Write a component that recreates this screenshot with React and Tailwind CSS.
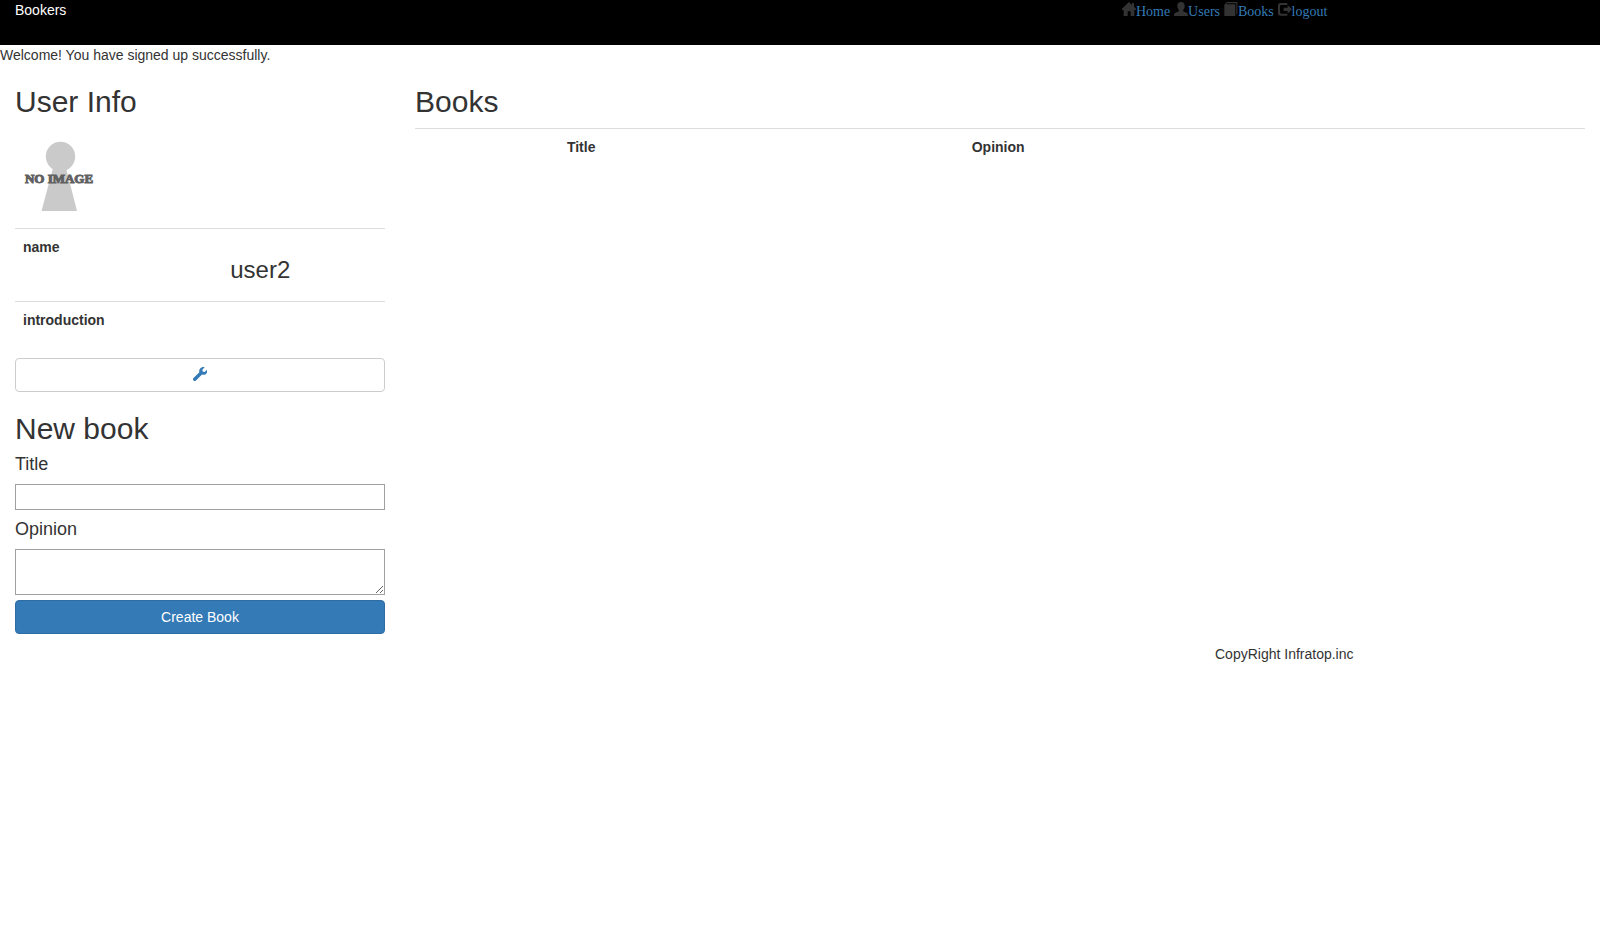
const HomeIcon = () => (
  <svg viewBox="0 0 42 42" className="inline-block size-3.5 fill-[#333] align-baseline" aria-hidden="true">
    <path d="M21 0 L30 9 V3 H36 V14 L42 20.500 V24 H37 V42 H26 V28 H17 V42 H5 V24 H0 V20.500 Z" />
  </svg>
);

const UserIcon = () => (
  <svg viewBox="0 0 42 42" className="inline-block size-3.5 fill-[#333] align-baseline" aria-hidden="true">
    <path d="M21 0 C28 0 32 4 32 11 C32 17 30 21 27.500 24 V28 C30 30 35 31 39 33 C41.500 35 42 38 42 42 H0 C0 38 0.500 35 3 33 C7 31 12 30 14.500 28 V24 C12 21 10 17 10 11 C10 4 14 0 21 0 Z" />
  </svg>
);

const BookIcon = () => (
  <svg viewBox="0 0 42 42" className="inline-block size-3.5 fill-[#333] align-baseline" aria-hidden="true">
    <path d="M9 0 H40 V36 L37 39 V4 H9 L6 7 H34 V42 H1 V8 Z" />
  </svg>
);

const LogoutIcon = () => (
  <svg viewBox="0 0 42 42" className="inline-block size-3.5 fill-[#333] align-baseline" aria-hidden="true">
    <path d="M8 3 H28 V9 H10 Q6 9 6 13 V31 Q6 35 10 35 H28 V41 H8 Q0 41 0 33 V11 Q0 3 8 3 Z" />
    <path d="M29 9 L42 22 L29 35 V27 H17 V17 H29 Z" />
  </svg>
);

const WrenchIcon = () => (
  <svg viewBox="0 0 42 42" className="size-3.5 fill-[#337ab7]" aria-hidden="true">
    <path d="M35 1 L28 8 L29 13.500 L35 15 L42 8 C44 14 42 19 38 21.500 C34 24 30 23.500 27 22.500 L9 40.500 Q5 44 1.500 40.500 Q-2 37 1.500 33 L19 16 C18 11 19 6 23 3 C27 0 31 -0.500 35 1 Z" />
  </svg>
);

const Avatar = () => (
  <svg viewBox="0 0 88 100" className="block h-25 w-22" role="img" aria-label="No image">
    <g fill="#cacaca">
      <circle cx="45.500" cy="28.500" r="14.700" />
      <path d="M38 40 H51 L62 83 H26.500 Z" />
    </g>
    <text
      x="44"
      y="55"
      textAnchor="middle"
      fill="#606060"
      stroke="#606060"
      strokeWidth="1"
      className="font-['Liberation_Serif',serif] text-[13px] font-bold"
    >
      NO IMAGE
    </text>
  </svg>
);

const links = [
  { label: "Home", Icon: HomeIcon },
  { label: "Users", Icon: UserIcon },
  { label: "Books", Icon: BookIcon },
  { label: "logout", Icon: LogoutIcon },
];

export default function App() {
  return (
    <div className="bg-white font-['Liberation_Sans',sans-serif] text-sm leading-5 text-[#333]">
      <header className="flex h-[45px] bg-black">
        <div className="w-[70%] px-[15px] text-white">Bookers</div>
        <nav className="px-0.5 pt-px">
          {links.map(({ label, Icon }) => (
            <span key={label}>
              <Icon />
              <a href="#" className="font-['Liberation_Serif',serif] text-[#337ab7]">{label}</a>{" "}
            </span>
          ))}
        </nav>
      </header>
      <p>Welcome! You have signed up successfully.</p>

      <main className="flex">
        <aside className="w-1/4 px-[15px]">
          <h2 className="mt-5 mb-2.5 text-[30px] leading-[33px]">User Info</h2>
          <Avatar />
          <table className="mb-5 w-full table-fixed text-left">
            <tbody>
              <tr className="border-t border-[#ddd] align-top">
                <th className="w-[56%] p-2">name</th>
                <td className="p-2">
                  <h3 className="mt-5 mb-2.5 text-2xl leading-[26px]">user2</h3>
                </td>
              </tr>
              <tr className="border-t border-[#ddd] align-top">
                <th className="p-2">introduction</th>
                <td className="p-2"></td>
              </tr>
            </tbody>
          </table>
          <a
            href="#"
            aria-label="Edit profile"
            className="flex h-[34px] justify-center rounded-sm border border-[#ccc] bg-white pt-2"
          >
            <WrenchIcon />
          </a>

          <h2 className="mt-5 mb-2.5 text-[30px] leading-[33px]">New book</h2>
          <form onSubmit={(event) => event.preventDefault()}>
            <label htmlFor="title" className="mb-[11px] block text-lg leading-[18px]">Title</label>
            <input id="title" type="text" className="block h-[26px] w-full border border-[#a0a0a0] px-1" />
            <label htmlFor="opinion" className="mt-2.5 mb-[11px] block text-lg leading-[18px]">Opinion</label>
            <textarea
              id="opinion"
              rows="2"
              className="mb-[5px] block h-[46px] w-full resize border border-[#a0a0a0] p-0.5"
            />
            <button
              type="submit"
              className="block h-[34px] w-full rounded-sm border border-[#2e6da4] bg-[#337ab7] text-white"
            >
              Create Book
            </button>
          </form>
        </aside>

        <section className="w-3/4 px-[15px]">
          <h2 className="mt-5 mb-2.5 text-[30px] leading-[33px]">Books</h2>
          <table className="w-full table-fixed text-left">
            <thead>
              <tr className="border-t border-[#ddd]">
                <td className="w-[12.3%] p-2"></td>
                <th className="w-[34.6%] p-2">Title</th>
                <th className="p-2">Opinion</th>
              </tr>
            </thead>
          </table>
        </section>
      </main>

      <footer className="mt-2.5 ml-[75%] px-[15px]">CopyRight Infratop.inc</footer>
    </div>
  );
}
